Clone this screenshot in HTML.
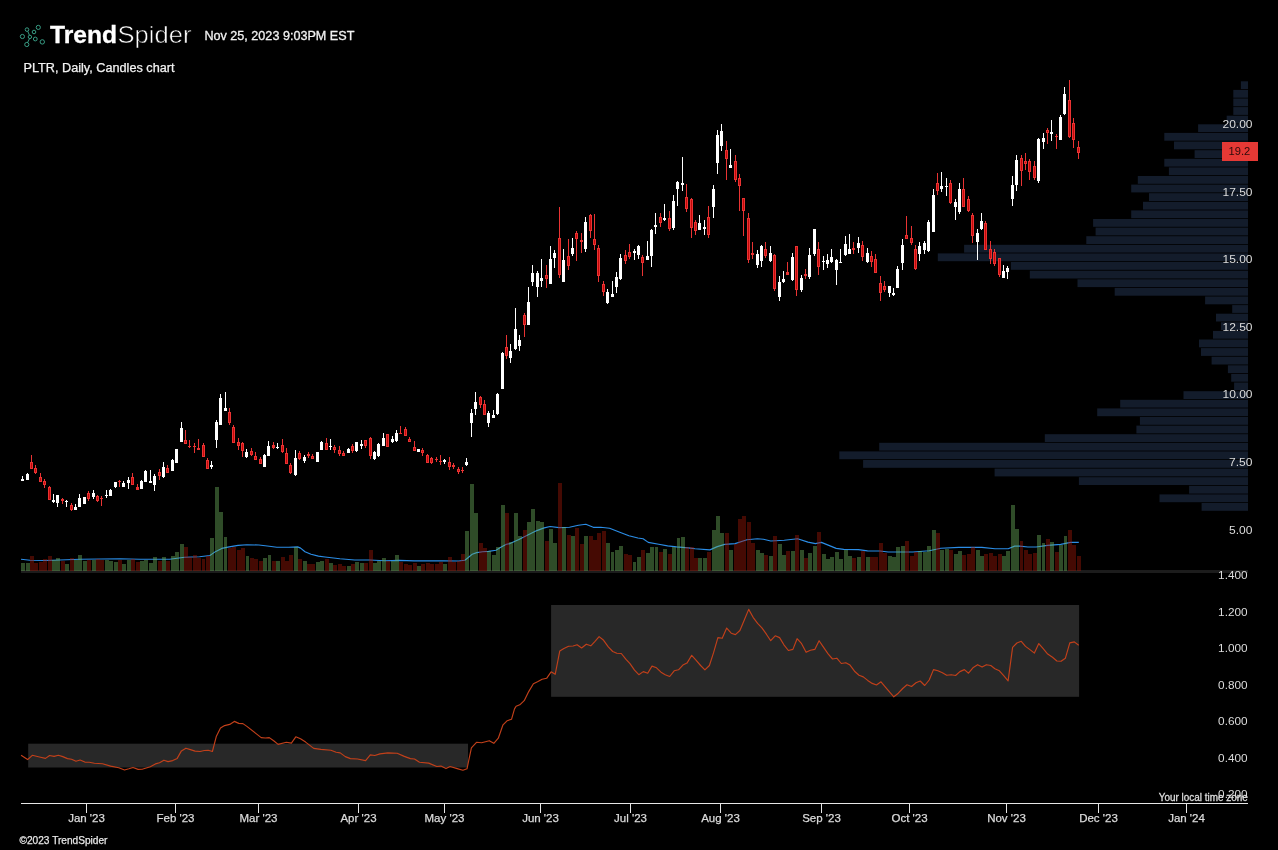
<!DOCTYPE html>
<html lang="en">
<head>
<meta charset="utf-8">
<title>PLTR, Daily, Candles chart - TrendSpider</title>
<style>
html,body{margin:0;padding:0;background:#000;}
body{width:1278px;height:850px;overflow:hidden;font-family:"Liberation Sans",sans-serif;}
svg{display:block;will-change:transform;}
</style>
</head>
<body>
<svg width="1278" height="850" viewBox="0 0 1278 850">
<g fill="#131c2b">
<rect x="1240.9" y="81.3" width="7.1" height="7.8"/>
<rect x="1233.3" y="89.9" width="14.7" height="7.8"/>
<rect x="1233.3" y="98.5" width="14.7" height="7.8"/>
<rect x="1233.3" y="107.1" width="14.7" height="7.8"/>
<rect x="1226.7" y="115.7" width="21.3" height="7.8"/>
<rect x="1198.1" y="124.3" width="49.9" height="7.8"/>
<rect x="1164.3" y="132.9" width="83.7" height="7.8"/>
<rect x="1174" y="141.5" width="74" height="7.8"/>
<rect x="1194.6" y="150.2" width="53.4" height="7.8"/>
<rect x="1164.3" y="158.8" width="83.7" height="7.8"/>
<rect x="1168.9" y="167.4" width="79.1" height="7.8"/>
<rect x="1137.8" y="176" width="110.2" height="7.8"/>
<rect x="1131.2" y="184.6" width="116.8" height="7.8"/>
<rect x="1149" y="193.2" width="99" height="7.8"/>
<rect x="1143" y="201.8" width="105" height="7.8"/>
<rect x="1131.2" y="210.4" width="116.8" height="7.8"/>
<rect x="1093.1" y="219" width="154.9" height="7.8"/>
<rect x="1095.6" y="227.6" width="152.4" height="7.8"/>
<rect x="1086.3" y="236.2" width="161.7" height="7.8"/>
<rect x="964.1" y="244.8" width="283.9" height="7.8"/>
<rect x="937.8" y="253.4" width="310.2" height="7.8"/>
<rect x="1010.9" y="262" width="237.1" height="7.8"/>
<rect x="1029.8" y="270.7" width="218.2" height="7.8"/>
<rect x="1077.5" y="279.3" width="170.5" height="7.8"/>
<rect x="1114.7" y="287.9" width="133.3" height="7.8"/>
<rect x="1205.1" y="296.5" width="42.9" height="7.8"/>
<rect x="1232.2" y="305.1" width="15.8" height="7.8"/>
<rect x="1216" y="313.7" width="32" height="7.8"/>
<rect x="1220.9" y="322.3" width="27.1" height="7.8"/>
<rect x="1213" y="330.9" width="35" height="7.8"/>
<rect x="1199" y="339.5" width="49" height="7.8"/>
<rect x="1201" y="348.1" width="47" height="7.8"/>
<rect x="1211.6" y="356.7" width="36.4" height="7.8"/>
<rect x="1227.9" y="365.3" width="20.1" height="7.8"/>
<rect x="1231.2" y="373.9" width="16.8" height="7.8"/>
<rect x="1234.1" y="382.5" width="13.9" height="7.8"/>
<rect x="1183.5" y="391.2" width="64.5" height="7.8"/>
<rect x="1120.2" y="399.8" width="127.8" height="7.8"/>
<rect x="1097.2" y="408.4" width="150.8" height="7.8"/>
<rect x="1139.9" y="417" width="108.1" height="7.8"/>
<rect x="1136.4" y="425.6" width="111.6" height="7.8"/>
<rect x="1044.8" y="434.2" width="203.2" height="7.8"/>
<rect x="879.2" y="442.8" width="368.8" height="7.8"/>
<rect x="839.3" y="451.4" width="408.7" height="7.8"/>
<rect x="863.1" y="460" width="384.9" height="7.8"/>
<rect x="994.6" y="468.6" width="253.4" height="7.8"/>
<rect x="1078.9" y="477.2" width="169.1" height="7.8"/>
<rect x="1189.1" y="485.8" width="58.9" height="7.8"/>
<rect x="1159.5" y="494.4" width="88.5" height="7.8"/>
<rect x="1201.6" y="503" width="46.4" height="7.8"/>
</g>
<rect x="21" y="570" width="1227" height="3" fill="#1c1c1c" shape-rendering="crispEdges"/>
<polyline fill="none" stroke="#2b8de6" stroke-width="1.15" stroke-linejoin="round" points="21,559.3 30,560.3 45,560.5 60,560 80,559.3 100,559 120,558.8 140,559.2 169.7,559.2 184.6,557.3 199.5,556.7 209.9,555.5 215.8,551.4 221.8,548.4 229.2,546.9 238.1,545.4 247,544.8 258.9,545 269.3,546.2 276.8,547.2 288.7,547.2 297.6,546.9 300.6,548.1 305,551.7 311,554.3 318.4,556.1 325,557 339.9,558.8 354.7,560 369.6,560 384.5,560.7 399.3,560.4 414.2,560.9 429.1,560.9 443.9,560.7 458.8,561 464.8,560.3 467.7,558 472.2,554.3 476.7,552.6 482.6,551.7 488.5,551.4 496,550.2 500.4,547.6 506.4,544.2 510,543.6 518.9,539.5 527.8,535 536.8,530.6 544.2,527.9 550.1,526.5 559.1,527.6 569.5,527.3 578.4,525.3 585.8,524.3 593.3,527.3 600.7,527.3 609.6,528.3 618.5,531.7 628.9,535.8 637.9,538 643.1,538.7 648.3,542.4 658.7,544.2 667.6,545.9 676.5,546.9 688.4,547.9 695,548.7 709.9,549.9 717.3,546.6 724.7,544.4 735.1,543.6 747,539.8 757.4,538.7 763.4,539.2 770.8,541 784.2,540.2 797.6,538.7 808,542.1 815.4,543.6 821.4,542.4 828.8,545.4 836.2,548.4 843.7,549.4 858.5,549.6 867.5,550.9 880,551 888.2,552 912.9,552 929.3,550.7 940.8,548.2 958.9,547.4 981.9,547.4 995,548.7 1008.2,548.7 1014.7,546.1 1019.7,546.1 1027.9,547 1036.1,547 1047.6,545.4 1060.7,544.4 1070.6,542.4 1078.8,542.4"/>
<g shape-rendering="crispEdges" fill-opacity="0.42">
<g fill="#70b55f"><rect x="21" y="563" width="4" height="8"/><rect x="26" y="563" width="4" height="8"/><rect x="52" y="560.2" width="4" height="10.8"/><rect x="56" y="558.1" width="4" height="12.9"/><rect x="65" y="564" width="4" height="7"/><rect x="74" y="560.2" width="4" height="10.8"/><rect x="78" y="555.1" width="4" height="15.9"/><rect x="83" y="561" width="4" height="10"/><rect x="92" y="560.2" width="4" height="10.8"/><rect x="105" y="560.2" width="4" height="10.8"/><rect x="109" y="561" width="4" height="10"/><rect x="114" y="562" width="4" height="9"/><rect x="122" y="564" width="4" height="7"/><rect x="127" y="560.2" width="4" height="10.8"/><rect x="140" y="561" width="4" height="10"/><rect x="144" y="560.3" width="4" height="10.7"/><rect x="149" y="563.3" width="4" height="7.7"/><rect x="153" y="557" width="4" height="14"/><rect x="162" y="557" width="4" height="14"/><rect x="171" y="556.1" width="4" height="14.9"/><rect x="175" y="552.1" width="4" height="18.9"/><rect x="180" y="544.2" width="4" height="26.8"/><rect x="210" y="538" width="4" height="33"/><rect x="215" y="487" width="4" height="84"/><rect x="219" y="512" width="4" height="59"/><rect x="224" y="536.9" width="3" height="34.1"/><rect x="246" y="556.1" width="3" height="14.9"/><rect x="263" y="558.1" width="4" height="12.9"/><rect x="268" y="555.1" width="3" height="15.9"/><rect x="276" y="561" width="4" height="10"/><rect x="294" y="547.2" width="4" height="23.8"/><rect x="303" y="561" width="4" height="10"/><rect x="316" y="562.1" width="4" height="8.9"/><rect x="320" y="561" width="4" height="10"/><rect x="329" y="563" width="4" height="8"/><rect x="347" y="566" width="4" height="5"/><rect x="355" y="562" width="4" height="9"/><rect x="360" y="563" width="4" height="8"/><rect x="373" y="563" width="4" height="8"/><rect x="377" y="561" width="4" height="10"/><rect x="382" y="558.1" width="4" height="12.9"/><rect x="391" y="561" width="4" height="10"/><rect x="395" y="555.1" width="4" height="15.9"/><rect x="417" y="566" width="4" height="5"/><rect x="443" y="564" width="4" height="7"/><rect x="465" y="531" width="4" height="40"/><rect x="470" y="484" width="4" height="87"/><rect x="474" y="513" width="4" height="58"/><rect x="487" y="551.1" width="4" height="19.9"/><rect x="492" y="555.1" width="4" height="15.9"/><rect x="496" y="547.2" width="4" height="23.8"/><rect x="501" y="505" width="4" height="66"/><rect x="509" y="542.1" width="4" height="28.9"/><rect x="514" y="513" width="4" height="58"/><rect x="518" y="536.2" width="4" height="34.8"/><rect x="527" y="522.1" width="4" height="48.9"/><rect x="531" y="509" width="4" height="62"/><rect x="536" y="520.9" width="4" height="50.1"/><rect x="540" y="522.1" width="4" height="48.9"/><rect x="549" y="529.1" width="4" height="41.9"/><rect x="553" y="543.2" width="4" height="27.8"/><rect x="562" y="527.3" width="4" height="43.7"/><rect x="571" y="536.2" width="4" height="34.8"/><rect x="584" y="536.2" width="4" height="34.8"/><rect x="606" y="543.2" width="4" height="27.8"/><rect x="611" y="552.1" width="3" height="18.9"/><rect x="615" y="550.2" width="4" height="20.8"/><rect x="619" y="546.2" width="4" height="24.8"/><rect x="633" y="562.1" width="3" height="8.9"/><rect x="637" y="557" width="4" height="14"/><rect x="646" y="553.1" width="4" height="17.9"/><rect x="650" y="547.2" width="4" height="23.8"/><rect x="655" y="547.2" width="3" height="23.8"/><rect x="663" y="549.1" width="4" height="21.9"/><rect x="672" y="547.2" width="4" height="23.8"/><rect x="677" y="538" width="3" height="33"/><rect x="681" y="536.9" width="4" height="34.1"/><rect x="698" y="558.1" width="4" height="12.9"/><rect x="703" y="558.1" width="4" height="12.9"/><rect x="712" y="530.1" width="4" height="40.9"/><rect x="716" y="516" width="4" height="55"/><rect x="720" y="533.1" width="4" height="37.9"/><rect x="729" y="550.2" width="4" height="20.8"/><rect x="756" y="550.2" width="4" height="20.8"/><rect x="760" y="553.1" width="4" height="17.9"/><rect x="769" y="556.1" width="4" height="14.9"/><rect x="778" y="544.2" width="4" height="26.8"/><rect x="782" y="555.1" width="4" height="15.9"/><rect x="791" y="551.1" width="4" height="19.9"/><rect x="800" y="550.2" width="4" height="20.8"/><rect x="808" y="553.1" width="4" height="17.9"/><rect x="813" y="546.2" width="4" height="24.8"/><rect x="822" y="554" width="4" height="17"/><rect x="826" y="559.1" width="4" height="11.9"/><rect x="830" y="557" width="4" height="14"/><rect x="835" y="552.1" width="4" height="18.9"/><rect x="839" y="559.1" width="4" height="11.9"/><rect x="844" y="550.2" width="4" height="20.8"/><rect x="848" y="556.1" width="4" height="14.9"/><rect x="857" y="557" width="4" height="14"/><rect x="866" y="557" width="4" height="14"/><rect x="888" y="555.9" width="4" height="15.1"/><rect x="892" y="556.9" width="4" height="14.1"/><rect x="896" y="547" width="4" height="24"/><rect x="901" y="546.1" width="4" height="24.9"/><rect x="918" y="551" width="4" height="20"/><rect x="923" y="552" width="4" height="19"/><rect x="927" y="546.1" width="4" height="24.9"/><rect x="932" y="530.1" width="4" height="40.9"/><rect x="940" y="549.8" width="4" height="21.2"/><rect x="945" y="549" width="4" height="22"/><rect x="954" y="553.9" width="4" height="17.1"/><rect x="958" y="551" width="4" height="20"/><rect x="976" y="550" width="4" height="21"/><rect x="980" y="555.9" width="4" height="15.1"/><rect x="1002" y="555.9" width="4" height="15.1"/><rect x="1006" y="551" width="4" height="20"/><rect x="1011" y="505" width="4" height="66"/><rect x="1015" y="529" width="4" height="42"/><rect x="1037" y="535" width="4" height="36"/><rect x="1042" y="542.9" width="3" height="28.1"/><rect x="1050" y="542.1" width="4" height="28.9"/><rect x="1059" y="544.9" width="4" height="26.1"/><rect x="1064" y="536" width="3" height="35"/></g>
<g fill="#a41807"><rect x="30" y="556.1" width="4" height="14.9"/><rect x="34" y="563" width="4" height="8"/><rect x="39" y="562.2" width="4" height="8.8"/><rect x="43" y="559.2" width="4" height="11.8"/><rect x="48" y="556.1" width="4" height="14.9"/><rect x="61" y="561" width="4" height="10"/><rect x="70" y="558.1" width="4" height="12.9"/><rect x="87" y="560.2" width="4" height="10.8"/><rect x="96" y="559.2" width="4" height="11.8"/><rect x="100" y="560.2" width="4" height="10.8"/><rect x="118" y="560.2" width="4" height="10.8"/><rect x="131" y="559.2" width="4" height="11.8"/><rect x="136" y="562" width="4" height="9"/><rect x="158" y="561" width="4" height="10"/><rect x="166" y="561" width="4" height="10"/><rect x="184" y="547.2" width="4" height="23.8"/><rect x="188" y="557.3" width="4" height="13.7"/><rect x="193" y="555.1" width="4" height="15.9"/><rect x="197" y="558.1" width="4" height="12.9"/><rect x="202" y="559.1" width="3" height="11.9"/><rect x="206" y="555.8" width="4" height="15.2"/><rect x="228" y="547.6" width="4" height="23.4"/><rect x="232" y="546.5" width="4" height="24.5"/><rect x="237" y="550.2" width="4" height="20.8"/><rect x="241" y="548.1" width="4" height="22.9"/><rect x="250" y="558.1" width="4" height="12.9"/><rect x="254" y="559.1" width="4" height="11.9"/><rect x="259" y="561" width="4" height="10"/><rect x="272" y="561" width="4" height="10"/><rect x="281" y="557" width="4" height="14"/><rect x="285" y="561" width="4" height="10"/><rect x="289" y="555.1" width="4" height="15.9"/><rect x="298" y="559.1" width="4" height="11.9"/><rect x="307" y="564" width="4" height="7"/><rect x="311" y="564" width="4" height="7"/><rect x="325" y="559.1" width="4" height="11.9"/><rect x="333" y="565" width="4" height="6"/><rect x="338" y="564" width="4" height="7"/><rect x="342" y="566" width="4" height="5"/><rect x="351" y="564" width="4" height="7"/><rect x="364" y="563" width="4" height="8"/><rect x="369" y="550.2" width="4" height="20.8"/><rect x="386" y="561" width="4" height="10"/><rect x="399" y="562" width="4" height="9"/><rect x="404" y="564" width="4" height="7"/><rect x="408" y="565" width="4" height="6"/><rect x="413" y="563" width="4" height="8"/><rect x="421" y="564" width="4" height="7"/><rect x="426" y="563" width="4" height="8"/><rect x="430" y="564" width="4" height="7"/><rect x="435" y="564" width="4" height="7"/><rect x="439" y="562" width="4" height="9"/><rect x="448" y="557" width="4" height="14"/><rect x="452" y="562" width="4" height="9"/><rect x="457" y="561" width="4" height="10"/><rect x="461" y="554" width="4" height="17"/><rect x="479" y="543.2" width="4" height="27.8"/><rect x="483" y="548.1" width="4" height="22.9"/><rect x="505" y="513" width="4" height="58"/><rect x="523" y="530.1" width="4" height="40.9"/><rect x="545" y="541" width="4" height="30"/><rect x="558" y="483" width="4" height="88"/><rect x="567" y="535" width="4" height="36"/><rect x="575" y="528" width="4" height="43"/><rect x="580" y="544.2" width="4" height="26.8"/><rect x="589" y="536.2" width="4" height="34.8"/><rect x="593" y="540.2" width="4" height="30.8"/><rect x="597" y="533.1" width="4" height="37.9"/><rect x="602" y="531" width="4" height="40"/><rect x="624" y="554" width="4" height="17"/><rect x="628" y="555.1" width="4" height="15.9"/><rect x="641" y="550.2" width="4" height="20.8"/><rect x="659" y="552.1" width="4" height="18.9"/><rect x="668" y="554" width="4" height="17"/><rect x="685" y="547.2" width="4" height="23.8"/><rect x="690" y="547.2" width="4" height="23.8"/><rect x="694" y="558.1" width="4" height="12.9"/><rect x="707" y="552.1" width="4" height="18.9"/><rect x="725" y="533.1" width="4" height="37.9"/><rect x="734" y="544.2" width="4" height="26.8"/><rect x="738" y="519.1" width="4" height="51.9"/><rect x="742" y="516" width="4" height="55"/><rect x="747" y="522.1" width="4" height="48.9"/><rect x="751" y="543.2" width="4" height="27.8"/><rect x="764" y="555.1" width="4" height="15.9"/><rect x="773" y="536.2" width="4" height="34.8"/><rect x="786" y="551.1" width="4" height="19.9"/><rect x="795" y="535" width="4" height="36"/><rect x="804" y="558.1" width="4" height="12.9"/><rect x="817" y="532" width="4" height="39"/><rect x="852" y="558.1" width="4" height="12.9"/><rect x="861" y="551.1" width="4" height="19.9"/><rect x="870" y="557" width="4" height="14"/><rect x="874" y="557" width="4" height="14"/><rect x="879" y="543" width="4" height="28"/><rect x="883" y="553" width="4" height="18"/><rect x="905" y="541.1" width="4" height="29.9"/><rect x="910" y="555.9" width="4" height="15.1"/><rect x="914" y="552" width="4" height="19"/><rect x="936" y="533.1" width="4" height="37.9"/><rect x="949" y="549.8" width="4" height="21.2"/><rect x="962" y="554.9" width="4" height="16.1"/><rect x="967" y="553.9" width="4" height="17.1"/><rect x="971" y="547.4" width="4" height="23.6"/><rect x="984" y="553.9" width="4" height="17.1"/><rect x="989" y="553" width="4" height="18"/><rect x="993" y="555.9" width="4" height="15.1"/><rect x="998" y="553.9" width="4" height="17.1"/><rect x="1020" y="541.1" width="3" height="29.9"/><rect x="1024" y="550" width="4" height="21"/><rect x="1028" y="553.9" width="4" height="17.1"/><rect x="1033" y="553" width="4" height="18"/><rect x="1046" y="539" width="4" height="32"/><rect x="1055" y="552" width="4" height="19"/><rect x="1068" y="530.1" width="4" height="40.9"/><rect x="1072" y="544.9" width="4" height="26.1"/><rect x="1077" y="555.9" width="4" height="15.1"/></g>
</g>
<g shape-rendering="crispEdges">
<path d="M22.5 476V480.7M27.5 473V479.7M53.5 494V503M57.5 495V507M66.5 500V507M75.5 504V510M79.5 494V506.8M84.5 497V504M93.5 490V498.8M106.5 490V498M110.5 489V495.7M115.5 482V488M123.5 481V486.8M128.5 477V489M141.5 480V489M145.5 470V482M150.5 470V483M154.5 474V491M163.5 462V478M172.5 459V471M176.5 449V462.7M181.5 422V442M211.5 461V468.8M216.5 420V448M220.5 394V424.6M225.5 392V411M246.5 449V458M264.5 454V466.8M268.5 441V456M277.5 443V449M295.5 450V475.9M304.5 455V462.9M317.5 452V461.9M321.5 441V449.9M330.5 439V449.9M348.5 448V452.9M356.5 442V451.9M361.5 440V449M374.5 451V459.8M378.5 443V457M383.5 433V446M392.5 436V442.9M396.5 430V441.9M418.5 449V451.8M444.5 459V464M466.5 458V465.8M471.5 409V437M475.5 392V414.9M488.5 411V426.9M493.5 410V418M497.5 393V414.9M502.5 352V389.4M510.5 344V362.9M515.5 308V350M519.5 335V350.9M528.5 287V325M532.5 265V286.2M537.5 271V296.7M541.5 259V287M550.5 246V283.9M554.5 250V268M563.5 249V281.9M572.5 238V256M585.5 217V251.9M607.5 289V303.8M612.5 281V296.7M616.5 272V292.9M620.5 254V279.9M634.5 249V260M638.5 245V259M647.5 241V260M651.5 229V266.9M655.5 213V234.1M664.5 204V221.1M673.5 195V229.8M677.5 181V205.9M682.5 157V191M699.5 215V229.8M704.5 220V234.9M713.5 185V217.9M717.5 130V173.9M721.5 124V150.8M730.5 149V167.8M757.5 250V268M761.5 245V267.1M770.5 246V262M779.5 276V300.8M783.5 271V283M792.5 253V281M801.5 275V292M809.5 248V279M814.5 229V255.9M823.5 256V269.8M827.5 254V268M831.5 249V263M836.5 259V284.9M840.5 249V263M845.5 236V255.9M849.5 234V253.8M858.5 237V253M867.5 248V263M889.5 286V296.9M893.5 288V295.9M897.5 266V287.9M902.5 239V269.9M919.5 242V261M924.5 241V254M928.5 220V251.9M933.5 189V231.9M941.5 172V191.8M946.5 178V195.9M955.5 199V220M959.5 183V213.9M977.5 229V260.1M981.5 213V230M1003.5 265V278M1007.5 266V279M1012.5 176V206M1016.5 155V190.8M1038.5 138V182.9M1043.5 133V148.9M1051.5 120V141M1060.5 115V140M1064.5 87V115" stroke="#ffffff" stroke-width="1" fill="none"/>
<path d="M31.5 455V468.8M35.5 465V474M40.5 473V481.7M44.5 479V487.8M49.5 486V499.8M62.5 498V504M71.5 503V511M88.5 491V500.8M97.5 495V502M101.5 496V506M119.5 480V487M132.5 473V484.8M137.5 484V489.8M159.5 469V480M167.5 465V473M185.5 430V444M189.5 439.8V448M194.5 443V453M198.5 439V449.8M203.5 443V457M207.5 458V468.8M229.5 408V425M233.5 425V443.4M238.5 438V449.8M242.5 442V457M251.5 448V456M255.5 452V460M260.5 457V463.8M273.5 442V449M282.5 439V452.9M286.5 448V463.9M290.5 463V473.9M299.5 451V459.8M308.5 452V457.8M312.5 454V458.8M326.5 438V449.9M334.5 444.9V452.9M339.5 445.9V456M343.5 451V455.8M352.5 444V452.9M365.5 440V447.9M370.5 437V459M387.5 434V446.8M400.5 426V434M405.5 427V435.8M409.5 437V441.9M414.5 441V450.8M422.5 448V455.9M427.5 454V462.7M431.5 457V463.8M436.5 457V461.9M440.5 455V465M449.5 457V469.9M453.5 463V468.8M458.5 467V473.9M462.5 467V472.9M480.5 396V408.1M484.5 400V414.9M506.5 335V358.5M524.5 313V336.8M546.5 265V287.9M559.5 207V277.8M568.5 239V270M576.5 231V261M581.5 233V252.9M590.5 214V237.9M594.5 214V249.8M598.5 245V281.9M603.5 281V295.9M625.5 250V263.9M629.5 244V259M642.5 255V276M660.5 213V227M669.5 211V230.8M686.5 184V212M691.5 198V238M695.5 220V234.9M708.5 206V238M726.5 141V179.8M735.5 155V181.9M739.5 174V210.8M743.5 198V236M748.5 213V262.9M752.5 242V258.9M765.5 242V257.9M774.5 254V291M787.5 262V274.9M796.5 246V296M805.5 269V279M818.5 242V274.9M853.5 242V254M862.5 241V261M871.5 251V267.1M875.5 254V272.9M880.5 276V301M884.5 281V292M906.5 216V238.9M911.5 226V245M915.5 245V269.9M937.5 173V194.9M950.5 180V204M963.5 178V207M968.5 196V211.9M972.5 213V242.9M985.5 221V249.9M990.5 241V264M994.5 249V265.9M999.5 258V277M1021.5 155V185.9M1025.5 153V169.9M1029.5 159V180M1034.5 161V180M1047.5 128V144M1056.5 134V148.9M1069.5 80V138M1073.5 118V147.9M1078.5 141V159" stroke="#e93333" stroke-width="1" fill="none"/>
<g fill="#ffffff"><rect x="21" y="479.2" width="3" height="1.5"/><rect x="26" y="474" width="3" height="5.7"/><rect x="52" y="500.2" width="3" height="2.1"/><rect x="56" y="495" width="3" height="7.8"/><rect x="65" y="500.8" width="3" height="1"/><rect x="74" y="507" width="3" height="3"/><rect x="78" y="498" width="3" height="8.8"/><rect x="83" y="497" width="3" height="7"/><rect x="92" y="493" width="3" height="4"/><rect x="105" y="494.9" width="3" height="1"/><rect x="109" y="490.2" width="3" height="5.5"/><rect x="114" y="482" width="3" height="5"/><rect x="122" y="483" width="3" height="3.8"/><rect x="127" y="480" width="3" height="3"/><rect x="140" y="481" width="3" height="8"/><rect x="144" y="471" width="3" height="11"/><rect x="149" y="481" width="3" height="2"/><rect x="153" y="476" width="3" height="9"/><rect x="162" y="467" width="3" height="10"/><rect x="171" y="460" width="3" height="11"/><rect x="175" y="449" width="3" height="13.7"/><rect x="180" y="428" width="3" height="14"/><rect x="210" y="464.8" width="3" height="2.2"/><rect x="215" y="421.8" width="3" height="18"/><rect x="219" y="398" width="3" height="26.6"/><rect x="224" y="408" width="3" height="3"/><rect x="245" y="452" width="3" height="5"/><rect x="263" y="455" width="3" height="11.8"/><rect x="267" y="446" width="3" height="10"/><rect x="276" y="447.1" width="3" height="1"/><rect x="294" y="457.8" width="3" height="17.3"/><rect x="303" y="456.8" width="3" height="4.1"/><rect x="316" y="452" width="3" height="9.9"/><rect x="320" y="441.8" width="3" height="8.1"/><rect x="329" y="445.6" width="3" height="1.2"/><rect x="347" y="449" width="3" height="3.9"/><rect x="355" y="442" width="3" height="9.2"/><rect x="360" y="444.1" width="3" height="2"/><rect x="373" y="452" width="3" height="6.8"/><rect x="377" y="444.1" width="3" height="11.9"/><rect x="382" y="438" width="3" height="8"/><rect x="391" y="438.8" width="3" height="3.1"/><rect x="395" y="433" width="3" height="7.9"/><rect x="417" y="449" width="3" height="2.8"/><rect x="443" y="460" width="3" height="1.9"/><rect x="465" y="461.9" width="3" height="2.9"/><rect x="470" y="413.1" width="3" height="10"/><rect x="474" y="402" width="3" height="7"/><rect x="487" y="413.1" width="3" height="10"/><rect x="492" y="415.1" width="3" height="2.9"/><rect x="496" y="393.9" width="3" height="20.2"/><rect x="501" y="353.2" width="3" height="36.2"/><rect x="509" y="351.4" width="3" height="6.2"/><rect x="514" y="329" width="3" height="20.1"/><rect x="518" y="340" width="3" height="6.1"/><rect x="527" y="302" width="3" height="23"/><rect x="531" y="272.9" width="3" height="8.9"/><rect x="536" y="272.6" width="3" height="14.4"/><rect x="540" y="278.1" width="3" height="2.8"/><rect x="549" y="259" width="3" height="24.9"/><rect x="553" y="252.9" width="3" height="5.1"/><rect x="562" y="260" width="3" height="21.9"/><rect x="571" y="247.8" width="3" height="6.1"/><rect x="584" y="221.9" width="3" height="27.1"/><rect x="606" y="292.3" width="3" height="10.6"/><rect x="611" y="294.1" width="3" height="2.6"/><rect x="615" y="276.5" width="3" height="10.2"/><rect x="619" y="258" width="3" height="20.8"/><rect x="633" y="251.1" width="3" height="1.8"/><rect x="637" y="246.1" width="3" height="8.8"/><rect x="646" y="256" width="3" height="4"/><rect x="650" y="230" width="3" height="26"/><rect x="654" y="224.9" width="3" height="2.3"/><rect x="663" y="218.1" width="3" height="2"/><rect x="672" y="201" width="3" height="26.8"/><rect x="676" y="182" width="3" height="7"/><rect x="681" y="183.1" width="3" height="2"/><rect x="698" y="223.2" width="3" height="6.6"/><rect x="703" y="227.1" width="3" height="1.7"/><rect x="712" y="189" width="3" height="18"/><rect x="716" y="135.1" width="3" height="27.6"/><rect x="720" y="131" width="3" height="14.9"/><rect x="729" y="165.1" width="3" height="2.7"/><rect x="756" y="254" width="3" height="10.9"/><rect x="760" y="246.1" width="3" height="14.9"/><rect x="769" y="253" width="3" height="8"/><rect x="778" y="282" width="3" height="15"/><rect x="782" y="279" width="3" height="3"/><rect x="791" y="257.1" width="3" height="22.9"/><rect x="800" y="278" width="3" height="12"/><rect x="808" y="255.1" width="3" height="21.8"/><rect x="813" y="228.9" width="3" height="24.9"/><rect x="822" y="261" width="3" height="1"/><rect x="826" y="259.9" width="3" height="4"/><rect x="830" y="257.1" width="3" height="4.9"/><rect x="835" y="259.9" width="3" height="9.9"/><rect x="839" y="262" width="3" height="1"/><rect x="844" y="244.1" width="3" height="11"/><rect x="848" y="249" width="3" height="4.8"/><rect x="857" y="243.1" width="3" height="4.8"/><rect x="866" y="253" width="3" height="9"/><rect x="888" y="286" width="3" height="6.8"/><rect x="892" y="293.1" width="3" height="1.8"/><rect x="896" y="268.9" width="3" height="19"/><rect x="901" y="245" width="3" height="17.8"/><rect x="918" y="246" width="3" height="8"/><rect x="923" y="243" width="3" height="7.1"/><rect x="927" y="221.9" width="3" height="29.2"/><rect x="932" y="195.1" width="3" height="36.8"/><rect x="940" y="185.9" width="3" height="3.1"/><rect x="945" y="185.9" width="3" height="1.1"/><rect x="954" y="202" width="3" height="5"/><rect x="958" y="189" width="3" height="22.9"/><rect x="976" y="232.9" width="3" height="9"/><rect x="980" y="220.8" width="3" height="8.4"/><rect x="1002" y="271" width="3" height="7"/><rect x="1006" y="268" width="3" height="4"/><rect x="1011" y="184.9" width="3" height="14"/><rect x="1015" y="159.9" width="3" height="25"/><rect x="1037" y="139" width="3" height="42"/><rect x="1042" y="138" width="3" height="4"/><rect x="1050" y="132" width="3" height="2"/><rect x="1059" y="117" width="3" height="23"/><rect x="1063" y="94" width="3" height="20"/></g>
<g fill="#e93333"><rect x="30" y="462" width="3" height="6.8"/><rect x="34" y="468" width="3" height="5"/><rect x="39" y="477" width="3" height="4.7"/><rect x="43" y="480.7" width="3" height="4.1"/><rect x="48" y="486.8" width="3" height="13"/><rect x="61" y="499" width="3" height="1.8"/><rect x="70" y="504.6" width="3" height="5.6"/><rect x="87" y="493" width="3" height="5.8"/><rect x="96" y="495.7" width="3" height="5.3"/><rect x="100" y="498" width="3" height="1"/><rect x="118" y="481" width="3" height="1"/><rect x="131" y="477" width="3" height="7.8"/><rect x="136" y="487" width="3" height="2.8"/><rect x="158" y="472" width="3" height="4"/><rect x="166" y="468" width="3" height="5"/><rect x="184" y="439.8" width="3" height="4.2"/><rect x="188" y="446" width="3" height="1"/><rect x="193" y="446" width="3" height="1"/><rect x="197" y="448" width="3" height="1.8"/><rect x="202" y="445" width="3" height="12"/><rect x="206" y="459.7" width="3" height="9.1"/><rect x="228" y="412.2" width="3" height="10.8"/><rect x="232" y="427" width="3" height="16.4"/><rect x="237" y="442" width="3" height="4"/><rect x="241" y="443" width="3" height="7.8"/><rect x="250" y="450.8" width="3" height="4.2"/><rect x="254" y="456" width="3" height="4"/><rect x="259" y="459" width="3" height="4.8"/><rect x="272" y="444.9" width="3" height="2.9"/><rect x="281" y="445.1" width="3" height="6.8"/><rect x="285" y="453" width="3" height="10.9"/><rect x="289" y="465.4" width="3" height="7.7"/><rect x="298" y="452.7" width="3" height="6.3"/><rect x="307" y="453.7" width="3" height="2.1"/><rect x="311" y="455.8" width="3" height="3"/><rect x="325" y="443.1" width="3" height="6.8"/><rect x="333" y="446.6" width="3" height="3.6"/><rect x="338" y="450" width="3" height="3.7"/><rect x="342" y="452.7" width="3" height="3.1"/><rect x="351" y="446.1" width="3" height="4.9"/><rect x="364" y="440" width="3" height="5.6"/><rect x="369" y="438" width="3" height="17.8"/><rect x="386" y="434.1" width="3" height="12.7"/><rect x="399" y="433.2" width="3" height="1"/><rect x="404" y="429" width="3" height="6.8"/><rect x="408" y="438.8" width="3" height="3.1"/><rect x="413" y="447" width="3" height="3.8"/><rect x="421" y="449.8" width="3" height="3.1"/><rect x="426" y="455.1" width="3" height="7.6"/><rect x="430" y="458" width="3" height="4.7"/><rect x="435" y="459.2" width="3" height="1"/><rect x="439" y="461" width="3" height="1"/><rect x="448" y="461.9" width="3" height="4.9"/><rect x="452" y="465" width="3" height="1.8"/><rect x="457" y="468.8" width="3" height="3.1"/><rect x="461" y="469.9" width="3" height="1"/><rect x="479" y="396.9" width="3" height="8.2"/><rect x="483" y="404" width="3" height="10.9"/><rect x="505" y="347" width="3" height="8.5"/><rect x="523" y="314.9" width="3" height="10.1"/><rect x="545" y="275.1" width="3" height="4"/><rect x="558" y="237.9" width="3" height="37.4"/><rect x="567" y="256" width="3" height="10.1"/><rect x="575" y="232.6" width="3" height="6.4"/><rect x="580" y="240" width="3" height="1.9"/><rect x="589" y="215.1" width="3" height="15.7"/><rect x="593" y="239" width="3" height="6.1"/><rect x="597" y="247.8" width="3" height="28.2"/><rect x="602" y="284.4" width="3" height="7.1"/><rect x="624" y="254.9" width="3" height="6.1"/><rect x="628" y="251.9" width="3" height="5.1"/><rect x="641" y="257" width="3" height="5.9"/><rect x="659" y="217.1" width="3" height="5.8"/><rect x="668" y="218.1" width="3" height="10.9"/><rect x="685" y="197.1" width="3" height="11.9"/><rect x="690" y="199.1" width="3" height="28.7"/><rect x="694" y="222" width="3" height="8.9"/><rect x="707" y="217.1" width="3" height="17.8"/><rect x="725" y="150" width="3" height="9"/><rect x="734" y="161" width="3" height="19"/><rect x="738" y="178" width="3" height="7.9"/><rect x="742" y="198.1" width="3" height="12.7"/><rect x="747" y="217.9" width="3" height="42"/><rect x="751" y="253" width="3" height="2.1"/><rect x="764" y="249" width="3" height="6.9"/><rect x="773" y="255.1" width="3" height="33.8"/><rect x="786" y="272.1" width="3" height="2.8"/><rect x="795" y="246.1" width="3" height="43.6"/><rect x="804" y="273.9" width="3" height="2"/><rect x="817" y="249" width="3" height="17.8"/><rect x="852" y="248.1" width="3" height="1.6"/><rect x="861" y="245.1" width="3" height="11.8"/><rect x="870" y="256.1" width="3" height="5.9"/><rect x="874" y="259.1" width="3" height="13.8"/><rect x="879" y="283" width="3" height="9.8"/><rect x="883" y="286" width="3" height="4"/><rect x="905" y="235" width="3" height="3.9"/><rect x="910" y="238.1" width="3" height="4.9"/><rect x="914" y="249.1" width="3" height="19.8"/><rect x="936" y="183.1" width="3" height="7.7"/><rect x="949" y="183.1" width="3" height="20.1"/><rect x="962" y="189" width="3" height="18"/><rect x="967" y="199" width="3" height="11.9"/><rect x="971" y="214.9" width="3" height="20.9"/><rect x="984" y="222.9" width="3" height="27"/><rect x="989" y="249.1" width="3" height="9.7"/><rect x="993" y="252" width="3" height="11.8"/><rect x="998" y="258.2" width="3" height="16.5"/><rect x="1020" y="157.9" width="3" height="12.7"/><rect x="1024" y="161" width="3" height="3"/><rect x="1028" y="161" width="3" height="10.9"/><rect x="1033" y="166" width="3" height="11.9"/><rect x="1046" y="130" width="3" height="3"/><rect x="1055" y="135.7" width="3" height="1"/><rect x="1068" y="100" width="3" height="36.9"/><rect x="1072" y="123.1" width="3" height="16.7"/><rect x="1077" y="147.1" width="3" height="5.8"/></g>
<g fill="#c40808"><rect x="31" y="463" width="1" height="4.8"/><rect x="35" y="469" width="1" height="3"/><rect x="40" y="478" width="1" height="2.7"/><rect x="44" y="481.7" width="1" height="2.1"/><rect x="49" y="487.8" width="1" height="11"/><rect x="71" y="505.6" width="1" height="3.6"/><rect x="88" y="494" width="1" height="3.8"/><rect x="97" y="496.7" width="1" height="3.3"/><rect x="132" y="478" width="1" height="5.8"/><rect x="159" y="473" width="1" height="2"/><rect x="167" y="469" width="1" height="3"/><rect x="185" y="440.8" width="1" height="2.2"/><rect x="203" y="446" width="1" height="10"/><rect x="207" y="460.7" width="1" height="7.1"/><rect x="229" y="413.2" width="1" height="8.8"/><rect x="233" y="428" width="1" height="14.4"/><rect x="238" y="443" width="1" height="2"/><rect x="242" y="444" width="1" height="5.8"/><rect x="251" y="451.8" width="1" height="2.2"/><rect x="255" y="457" width="1" height="2"/><rect x="260" y="460" width="1" height="2.8"/><rect x="282" y="446.1" width="1" height="4.8"/><rect x="286" y="454" width="1" height="8.9"/><rect x="290" y="466.4" width="1" height="5.7"/><rect x="299" y="453.7" width="1" height="4.3"/><rect x="312" y="456.8" width="1" height="1"/><rect x="326" y="444.1" width="1" height="4.8"/><rect x="334" y="447.6" width="1" height="1.6"/><rect x="339" y="451" width="1" height="1.7"/><rect x="343" y="453.7" width="1" height="1.1"/><rect x="352" y="447.1" width="1" height="2.9"/><rect x="365" y="441" width="1" height="3.6"/><rect x="370" y="439" width="1" height="15.8"/><rect x="387" y="435.1" width="1" height="10.7"/><rect x="405" y="430" width="1" height="4.8"/><rect x="409" y="439.8" width="1" height="1.1"/><rect x="414" y="448" width="1" height="1.8"/><rect x="422" y="450.8" width="1" height="1.1"/><rect x="427" y="456.1" width="1" height="5.6"/><rect x="431" y="459" width="1" height="2.7"/><rect x="449" y="462.9" width="1" height="2.9"/><rect x="458" y="469.8" width="1" height="1.1"/><rect x="480" y="397.9" width="1" height="6.2"/><rect x="484" y="405" width="1" height="8.9"/><rect x="506" y="348" width="1" height="6.5"/><rect x="524" y="315.9" width="1" height="8.1"/><rect x="546" y="276.1" width="1" height="2"/><rect x="559" y="238.9" width="1" height="35.4"/><rect x="568" y="257" width="1" height="8.1"/><rect x="576" y="233.6" width="1" height="4.4"/><rect x="590" y="216.1" width="1" height="13.7"/><rect x="594" y="240" width="1" height="4.1"/><rect x="598" y="248.8" width="1" height="26.2"/><rect x="603" y="285.4" width="1" height="5.1"/><rect x="625" y="255.9" width="1" height="4.1"/><rect x="629" y="252.9" width="1" height="3.1"/><rect x="642" y="258" width="1" height="3.9"/><rect x="660" y="218.1" width="1" height="3.8"/><rect x="669" y="219.1" width="1" height="8.9"/><rect x="686" y="198.1" width="1" height="9.9"/><rect x="691" y="200.1" width="1" height="26.7"/><rect x="695" y="223" width="1" height="6.9"/><rect x="708" y="218.1" width="1" height="15.8"/><rect x="726" y="151" width="1" height="7"/><rect x="735" y="162" width="1" height="17"/><rect x="739" y="179" width="1" height="5.9"/><rect x="743" y="199.1" width="1" height="10.7"/><rect x="748" y="218.9" width="1" height="40"/><rect x="765" y="250" width="1" height="4.9"/><rect x="774" y="256.1" width="1" height="31.8"/><rect x="796" y="247.1" width="1" height="41.6"/><rect x="818" y="250" width="1" height="15.8"/><rect x="862" y="246.1" width="1" height="9.8"/><rect x="871" y="257.1" width="1" height="3.9"/><rect x="875" y="260.1" width="1" height="11.8"/><rect x="880" y="284" width="1" height="7.8"/><rect x="884" y="287" width="1" height="2"/><rect x="906" y="236" width="1" height="1.9"/><rect x="911" y="239.1" width="1" height="2.9"/><rect x="915" y="250.1" width="1" height="17.8"/><rect x="937" y="184.1" width="1" height="5.7"/><rect x="950" y="184.1" width="1" height="18.1"/><rect x="963" y="190" width="1" height="16"/><rect x="968" y="200" width="1" height="9.9"/><rect x="972" y="215.9" width="1" height="18.9"/><rect x="985" y="223.9" width="1" height="25"/><rect x="990" y="250.1" width="1" height="7.7"/><rect x="994" y="253" width="1" height="9.8"/><rect x="999" y="259.2" width="1" height="14.5"/><rect x="1021" y="158.9" width="1" height="10.7"/><rect x="1025" y="162" width="1" height="1"/><rect x="1029" y="162" width="1" height="8.9"/><rect x="1034" y="167" width="1" height="9.9"/><rect x="1047" y="131" width="1" height="1"/><rect x="1069" y="101" width="1" height="34.9"/><rect x="1073" y="124.1" width="1" height="14.7"/><rect x="1078" y="148.1" width="1" height="3.8"/></g>
</g>
<g font-family="Liberation Sans, sans-serif" font-size="11" fill="#dcdcdc" text-anchor="end">
<text x="1252.5" y="128" textLength="30" lengthAdjust="spacingAndGlyphs">20.00</text>
<text x="1252.5" y="196" textLength="30" lengthAdjust="spacingAndGlyphs">17.50</text>
<text x="1252.5" y="262.8" textLength="30" lengthAdjust="spacingAndGlyphs">15.00</text>
<text x="1252.5" y="331" textLength="30" lengthAdjust="spacingAndGlyphs">12.50</text>
<text x="1252.5" y="398" textLength="30" lengthAdjust="spacingAndGlyphs">10.00</text>
<text x="1252.5" y="466" textLength="23.4" lengthAdjust="spacingAndGlyphs">7.50</text>
<text x="1252.5" y="534" textLength="23.4" lengthAdjust="spacingAndGlyphs">5.00</text>
<text x="1247.6" y="579" textLength="29.5" lengthAdjust="spacingAndGlyphs">1.400</text>
<text x="1247.6" y="616" textLength="29.5" lengthAdjust="spacingAndGlyphs">1.200</text>
<text x="1247.6" y="652" textLength="29.5" lengthAdjust="spacingAndGlyphs">1.000</text>
<text x="1247.6" y="689" textLength="29.5" lengthAdjust="spacingAndGlyphs">0.800</text>
<text x="1247.6" y="725" textLength="29.5" lengthAdjust="spacingAndGlyphs">0.600</text>
<text x="1247.6" y="762" textLength="29.5" lengthAdjust="spacingAndGlyphs">0.400</text>
<text x="1247.6" y="798" textLength="29.5" lengthAdjust="spacingAndGlyphs">0.200</text>
</g>
<rect x="1222" y="142" width="36" height="19" fill="#e53935"/>
<text x="1228.5" y="155" font-family="Liberation Sans, sans-serif" font-size="11" fill="#2b0b0b" textLength="21.7" lengthAdjust="spacingAndGlyphs">19.2</text>
<rect x="28.2" y="743.7" width="439.8" height="23.8" fill="#282828"/>
<rect x="551.1" y="605" width="528" height="91.8" fill="#282828"/>
<polyline fill="none" stroke="#c2401a" stroke-width="1.15" stroke-linejoin="round" points="21.1,755.3 27.6,759.6 32.3,755.3 39.4,757 45.5,758.4 49.6,755.5 54.1,756.4 58.3,755.3 62.8,756.6 67.5,758.6 71.6,759.2 76,761.2 80.1,760 84.8,762.1 89.3,762.3 94.4,763.3 102.5,763.7 110.6,766.1 118.8,767.8 124.5,770 128.9,768.8 133,767.5 138.1,769.4 142.2,769.2 150.3,766.7 155.4,763.9 159.5,762.7 163.9,760.2 168,761.6 172.7,760.6 177.2,758.4 181.4,750.9 185.9,748.2 190.4,749.6 195.1,751.1 200.1,751.5 204.2,750.5 208.3,750.3 212.4,751.5 216.4,736.2 220.5,728.1 224.6,725.6 229.7,724.4 234.3,721.4 238.8,723.4 242.9,723.6 246.9,726.4 256.1,733.6 261.2,737.6 265.3,738 269.3,737.6 274,741 278.1,744.4 286.3,742.3 291.4,743.1 295.8,736.8 300.5,738.7 305.6,742.1 313.7,748.4 320.9,749.4 331,750.3 336.1,752.3 340.2,752.9 345.3,756.6 350.4,758.6 357.5,759 365.6,760.6 370.3,754.9 374.8,755.5 379.9,753.9 388,752.9 397.2,753.3 404.3,756.4 410.4,758.6 414.5,759 419.5,762.3 428.7,763.1 436.8,766.5 440.9,766.1 446,768.6 450.1,766.5 457.2,768.6 462.9,770.2 467,768.8 471.4,747.8 476.5,742.3 481.6,742.7 489.3,740.7 493.8,743.3 498.3,738.2 503,724.8 507,720.8 511.5,719.3 514.5,708.9 516.1,706.2 519.8,704.8 524.2,700.7 528.7,691.6 533.4,683.8 537.5,681.8 542.1,679.3 546.6,678.3 551.1,671.8 555.2,674.3 559.8,650.9 563.9,648.4 568.6,646.2 573.1,646 577.1,644.8 581.6,648 586.3,644.2 590.8,645.8 595,641.3 599.1,636.6 603.6,640.3 608.3,646.8 612.7,651.5 616.8,653.3 621.3,653.5 626,659.4 630,663.7 634.5,670.2 638.8,674.7 643.3,671.6 647.7,673.2 652,666.1 656.5,667.8 661,672.2 665.2,674.7 669.7,676.5 674.2,670.8 678.5,669.8 682.9,665.1 687,663.1 691.7,655.3 696.2,660.4 700.6,665.5 704.9,669.8 709.4,665.5 713.5,652.9 717.9,637.6 722.2,638.3 726.7,628.1 731.2,633.2 735.4,634.6 739.9,630.5 744.4,619.7 748.7,609.4 753.1,617.3 757.6,623.4 761.9,627.9 766.4,634.2 770.7,640.7 775.2,635.8 779.6,637.6 783.9,644.8 788.4,650.5 792.9,649.4 797.1,638.7 801.6,643.7 806.1,652.3 810.4,650.3 814.8,649.4 819.1,640.7 823.6,647.4 828.1,653.9 832.5,659 836.8,658.2 841.3,663.5 845.8,662.7 850,665.1 854.5,671.2 859,675.3 863.3,676.9 867.7,680.4 872.2,683.4 876.5,685 881,681.8 885.4,687.1 889.7,692.2 893.8,696.8 898.3,693.2 902.7,688.5 907,684.8 911.5,686.5 916,682.8 920.2,681 924.7,685.5 929.2,680 933.5,669.6 937.9,670.8 942.4,672.8 946.7,675.3 951.2,674.7 955.6,675.5 959.9,671.6 964.4,669.6 968.5,673.2 972.9,667.8 977.6,664.7 982.1,667.1 986.4,664.7 990.8,665.5 994.9,668.8 999.4,670.8 1003.7,675.7 1008.1,680.8 1012.6,647.4 1016.9,643 1021.3,641.3 1025.5,646.4 1029.6,649.4 1034.4,653.1 1038.8,643.6 1043.2,648.7 1047.7,654.1 1052.5,657.2 1056.9,661 1061,661.3 1065.4,658.2 1069.8,642.9 1074.3,641.9 1078.7,645.3"/>
<g shape-rendering="crispEdges" fill="#e6e6e6">
<rect x="21" y="802.5" width="1227" height="1"/>
<rect x="86" y="803" width="1" height="9.5"/>
<rect x="175" y="803" width="1" height="9.5"/>
<rect x="258" y="803" width="1" height="9.5"/>
<rect x="358" y="803" width="1" height="9.5"/>
<rect x="444" y="803" width="1" height="9.5"/>
<rect x="540" y="803" width="1" height="9.5"/>
<rect x="630" y="803" width="1" height="9.5"/>
<rect x="720" y="803" width="1" height="9.5"/>
<rect x="821" y="803" width="1" height="9.5"/>
<rect x="909" y="803" width="1" height="9.5"/>
<rect x="1006" y="803" width="1" height="9.5"/>
<rect x="1098" y="803" width="1" height="9.5"/>
<rect x="1186" y="803" width="1" height="9.5"/>
</g>
<g font-family="Liberation Sans, sans-serif" font-size="11.5" fill="#dcdcdc" stroke="#dcdcdc" stroke-width="0.25" text-anchor="middle">
<text x="86.5" y="822.2">Jan '23</text>
<text x="175.5" y="822.2">Feb '23</text>
<text x="258.5" y="822.2">Mar '23</text>
<text x="358.5" y="822.2">Apr '23</text>
<text x="444.5" y="822.2">May '23</text>
<text x="540.5" y="822.2">Jun '23</text>
<text x="630.5" y="822.2">Jul '23</text>
<text x="720.5" y="822.2">Aug '23</text>
<text x="821.5" y="822.2">Sep '23</text>
<text x="909.5" y="822.2">Oct '23</text>
<text x="1006.5" y="822.2">Nov '23</text>
<text x="1098.5" y="822.2">Dec '23</text>
<text x="1186.5" y="822.2">Jan '24</text>
</g>
<text x="1247.8" y="800.5" font-family="Liberation Sans, sans-serif" font-size="10" fill="#dcdcdc" stroke="#dcdcdc" stroke-width="0.3" text-anchor="end" textLength="89" lengthAdjust="spacingAndGlyphs">Your local time zone</text>
<g font-family="Liberation Sans, sans-serif">
<text x="50" y="43" font-size="23.6" font-weight="bold" fill="#ffffff" stroke="#fff" stroke-width="0.3" textLength="67" lengthAdjust="spacingAndGlyphs">Trend</text>
<text x="117.6" y="43" font-size="23.6" fill="#ffffff" stroke="#000" stroke-width="0.55" textLength="73.8" lengthAdjust="spacingAndGlyphs">Spider</text>
<text x="204.4" y="40" font-size="13" fill="#f2f2f2" stroke="#f2f2f2" stroke-width="0.3" textLength="150" lengthAdjust="spacingAndGlyphs">Nov 25, 2023 9:03PM EST</text>
<text x="23.5" y="71.8" font-size="12.3" fill="#f2f2f2" stroke="#f2f2f2" stroke-width="0.25" textLength="151" lengthAdjust="spacingAndGlyphs">PLTR, Daily, Candles chart</text>
<text x="19.5" y="843.7" font-size="10.5" fill="#e8e8e8" stroke="#e8e8e8" stroke-width="0.25" textLength="88" lengthAdjust="spacingAndGlyphs">©2023 TrendSpider</text>
</g>
<g fill="none" stroke="#3ba38a" stroke-width="0.95">
<path d="M27.8 31.3L29.4 35.2M29.5 38.6L27.5 42.7"/>
<circle cx="38.3" cy="27.4" r="2.1"/>
<circle cx="27" cy="29.6" r="1.8"/>
<circle cx="34" cy="32" r="1.8"/>
<circle cx="22.4" cy="36.5" r="2.1"/>
<circle cx="29.9" cy="36.9" r="1.7"/>
<circle cx="35.3" cy="39" r="1.9"/>
<circle cx="42.3" cy="41.9" r="2.2"/>
<circle cx="26.8" cy="44.5" r="2.1"/>
</g>
</svg>
</body>
</html>
